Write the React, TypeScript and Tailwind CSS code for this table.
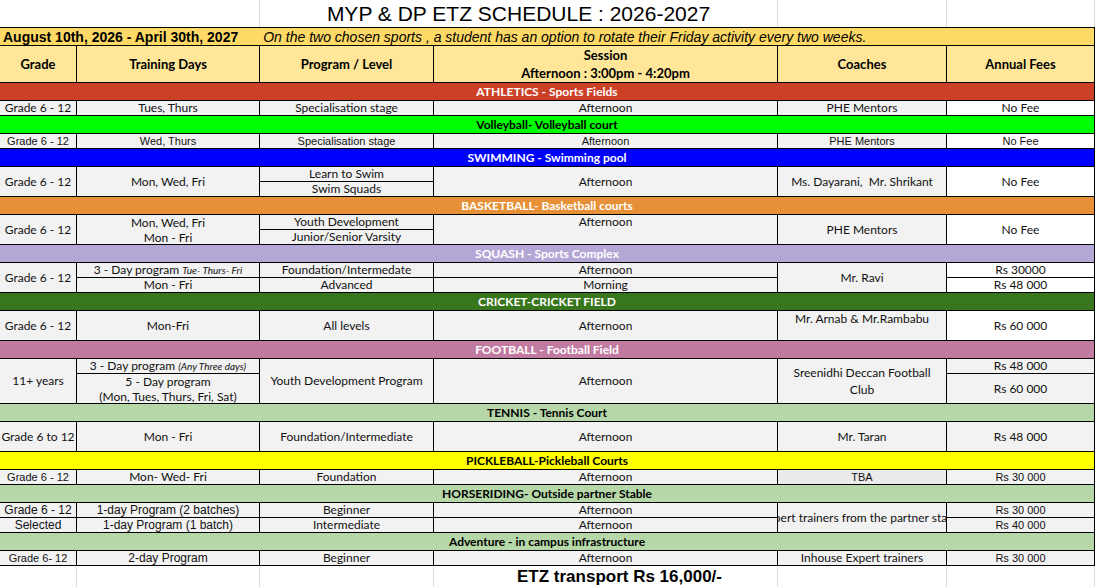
import type { ReactNode } from 'react'

const COLS = 'grid grid-cols-[77px_183px_174px_344px_169px_148px]'
const ARIAL = "font-['Liberation_Sans',Arial,sans-serif] text-[11px]"

type CellProps = {
  children?: ReactNode
  white?: boolean
  arial?: boolean
  className?: string
}

function C({ children, white, arial, className = '' }: CellProps) {
  return (
    <div
      className={`flex items-center justify-center overflow-hidden whitespace-nowrap border-r border-b border-black ${
        white ? 'bg-white' : 'bg-[#f2f2f2]'
      } ${arial ? ARIAL : ''} ${className}`}
    >
      {children}
    </div>
  )
}

function Bar({ label, bg, light }: { label: string; bg: string; light?: boolean }) {
  return (
    <div
      className={`flex h-[18px] items-center justify-center border-r border-b border-black text-[12px] font-bold ${bg} ${
        light ? 'text-white' : 'text-black'
      }`}
    >
      {label}
    </div>
  )
}

export default function App() {
  return (
    <div className="h-[587px] w-[1097px] overflow-hidden bg-white font-['Lato',sans-serif] text-[12px] leading-[14px] text-[#111]">
      <div className="w-[1095px]">
        {/* title row */}
        <div className={`${COLS} h-[27px]`}>
          <div className="col-span-2 border-r border-[#dadada]" />
          <div className="col-span-2 flex items-center justify-center border-r border-[#dadada] font-['Liberation_Sans',Arial,sans-serif] text-[21px] leading-[24px] text-black">
            MYP &amp; DP ETZ SCHEDULE : 2026-2027
          </div>
          <div className="border-r border-[#dadada]" />
          <div className="border-r border-[#dadada]" />
        </div>

        {/* dates row */}
        <div className="flex h-[19px] items-center whitespace-nowrap border-t border-r border-b border-black bg-[#ffd966] font-['Liberation_Sans',Arial,sans-serif] text-[14px] text-black">
          <span className="pl-[3px] font-bold">August 10th, 2026 - April 30th, 2027</span>
          <span className="pl-[25px] italic">
            On the two chosen sports , a student has an option to rotate their Friday activity every two weeks.
          </span>
        </div>

        {/* header */}
        <div className={`${COLS} h-[37px] bg-[#ffe699] text-[13px] font-bold text-black`}>
          <div className="flex items-center justify-center border-r border-b border-black">Grade</div>
          <div className="flex items-center justify-center border-r border-b border-black">Training Days</div>
          <div className="flex items-center justify-center border-r border-b border-black">Program / Level</div>
          <div className="flex flex-col items-center justify-center border-r border-b border-black leading-[18px]">
            <span>Session</span>
            <span>Afternoon : 3:00pm - 4:20pm</span>
          </div>
          <div className="flex items-center justify-center border-r border-b border-black">Coaches</div>
          <div className="flex items-center justify-center border-r border-b border-black">Annual Fees</div>
        </div>

        {/* athletics */}
        <Bar label="ATHLETICS - Sports Fields" bg="bg-[#cc4125]" light />
        <div className={`${COLS} grid-rows-[15px]`}>
          <C>Grade 6 - 12</C>
          <C>Tues, Thurs</C>
          <C>Specialisation stage</C>
          <C>Afternoon</C>
          <C>PHE Mentors</C>
          <C white>No Fee</C>
        </div>

        {/* volleyball */}
        <Bar label="Volleyball- Volleyball court" bg="bg-[#00ff00]" />
        <div className={`${COLS} grid-rows-[15px]`}>
          <C arial>Grade 6 - 12</C>
          <C arial>Wed, Thurs</C>
          <C arial>Specialisation stage</C>
          <C arial>Afternoon</C>
          <C arial>PHE Mentors</C>
          <C arial white>No Fee</C>
        </div>

        {/* swimming */}
        <Bar label="SWIMMING - Swimming pool" bg="bg-[#0000ff]" light />
        <div className={`${COLS} grid-rows-[15px_15px]`}>
          <C className="row-span-2">Grade 6 - 12</C>
          <C className="row-span-2">Mon, Wed, Fri</C>
          <C>Learn to Swim</C>
          <C className="row-span-2">Afternoon</C>
          <C className="row-span-2">Ms. Dayarani,&nbsp; Mr. Shrikant</C>
          <C white className="row-span-2">No Fee</C>
          <C>Swim Squads</C>
        </div>

        {/* basketball */}
        <Bar label="BASKETBALL- Basketball courts" bg="bg-[#e69138]" light />
        <div className={`${COLS} grid-rows-[15px_15px]`}>
          <C className="row-span-2">Grade 6 - 12</C>
          <C className="row-span-2 flex-col leading-[15px]">
            <span>Mon, Wed, Fri</span>
            <span>Mon - Fri</span>
          </C>
          <C>Youth Development</C>
          <C className="row-span-2 !items-start">Afternoon</C>
          <C className="row-span-2">PHE Mentors</C>
          <C white className="row-span-2">No Fee</C>
          <C>Junior/Senior Varsity</C>
        </div>

        {/* squash */}
        <Bar label="SQUASH - Sports Complex" bg="bg-[#b4a7d6]" light />
        <div className={`${COLS} grid-rows-[15px_15px]`}>
          <C className="row-span-2">Grade 6 - 12</C>
          <C>
            3 - Day program&nbsp;<i className="text-[10px]">Tue- Thurs- Fri</i>
          </C>
          <C>Foundation/Intermedate</C>
          <C>Afternoon</C>
          <C className="row-span-2">Mr. Ravi</C>
          <C white>Rs 30000</C>
          <C>Mon - Fri</C>
          <C>Advanced</C>
          <C>Morning</C>
          <C white>Rs 48 000</C>
        </div>

        {/* cricket */}
        <Bar label="CRICKET-CRICKET FIELD" bg="bg-[#38761d]" light />
        <div className={`${COLS} grid-rows-[30px]`}>
          <C>Grade 6 - 12</C>
          <C>Mon-Fri</C>
          <C>All levels</C>
          <C>Afternoon</C>
          <C className="!items-start pt-[1px]">Mr. Arnab &amp; Mr.Rambabu</C>
          <C white>Rs 60 000</C>
        </div>

        {/* football */}
        <Bar label="FOOTBALL - Football Field" bg="bg-[#c27ba0]" light />
        <div className={`${COLS} grid-rows-[15px_30px]`}>
          <C className="row-span-2">11+ years</C>
          <C>
            3 - Day program&nbsp;<i className="text-[10px]">(Any Three days)</i>
          </C>
          <C className="row-span-2">Youth Development Program</C>
          <C className="row-span-2">Afternoon</C>
          <C className="row-span-2 flex-col leading-[17px]">
            <span>Sreenidhi Deccan Football</span>
            <span>Club</span>
          </C>
          <C>Rs 48 000</C>
          <C className="flex-col leading-[15px]">
            <span>5 - Day program</span>
            <span>(Mon, Tues, Thurs, Fri, Sat)</span>
          </C>
          <C>Rs 60 000</C>
        </div>

        {/* tennis */}
        <Bar label="TENNIS - Tennis Court" bg="bg-[#b6d7a8]" />
        <div className={`${COLS} grid-rows-[30px]`}>
          <C>Grade 6 to 12</C>
          <C>Mon - Fri</C>
          <C>Foundation/Intermediate</C>
          <C>Afternoon</C>
          <C>Mr. Taran</C>
          <C>Rs 48 000</C>
        </div>

        {/* pickleball */}
        <Bar label="PICKLEBALL-Pickleball Courts" bg="bg-[#ffff00]" />
        <div className={`${COLS} grid-rows-[15px]`}>
          <C arial>Grade 6 - 12</C>
          <C>Mon- Wed- Fri</C>
          <C>Foundation</C>
          <C>Afternoon</C>
          <C arial className="!bg-[#ebebeb]">TBA</C>
          <C arial>Rs 30 000</C>
        </div>

        {/* horseriding */}
        <Bar label="HORSERIDING- Outside partner Stable" bg="bg-[#b6d7a8]" />
        <div className={`${COLS} grid-rows-[15px_15px]`}>
          <C arial className="!text-[12px]">Grade 6 - 12</C>
          <C arial className="!text-[12px]">1-day Program (2 batches)</C>
          <C>Beginner</C>
          <C>Afternoon</C>
          <C className="row-span-2">Expert trainers from the partner stable</C>
          <C arial>Rs 30 000</C>
          <C arial className="!text-[12px]">Selected</C>
          <C arial className="!text-[12px]">1-day Program (1 batch)</C>
          <C>Intermediate</C>
          <C>Afternoon</C>
          <C arial>Rs 40 000</C>
        </div>

        {/* adventure */}
        <Bar label="Adventure - in campus infrastructure" bg="bg-[#b6d7a8]" />
        <div className={`${COLS} grid-rows-[15px]`}>
          <C arial>Grade 6- 12</C>
          <C arial className="!text-[12px]">2-day Program</C>
          <C>Beginner</C>
          <C>Afternoon</C>
          <C>Inhouse Expert trainers</C>
          <C arial>Rs 30 000</C>
        </div>

        {/* transport */}
        <div className={`${COLS} h-[22px]`}>
          <div className="border-r border-b border-[#dadada]" />
          <div className="border-r border-b border-[#dadada]" />
          <div className="border-r border-b border-[#dadada]" />
          <div className="relative z-10 flex items-center whitespace-nowrap border-r border-b border-[#dadada] pl-[83px] font-['Liberation_Sans',Arial,sans-serif] text-[17px] font-bold text-black">
            ETZ transport Rs 16,000/-
          </div>
          <div className="border-r border-b border-[#dadada]" />
          <div className="border-r border-b border-[#dadada]" />
        </div>
      </div>
    </div>
  )
}
